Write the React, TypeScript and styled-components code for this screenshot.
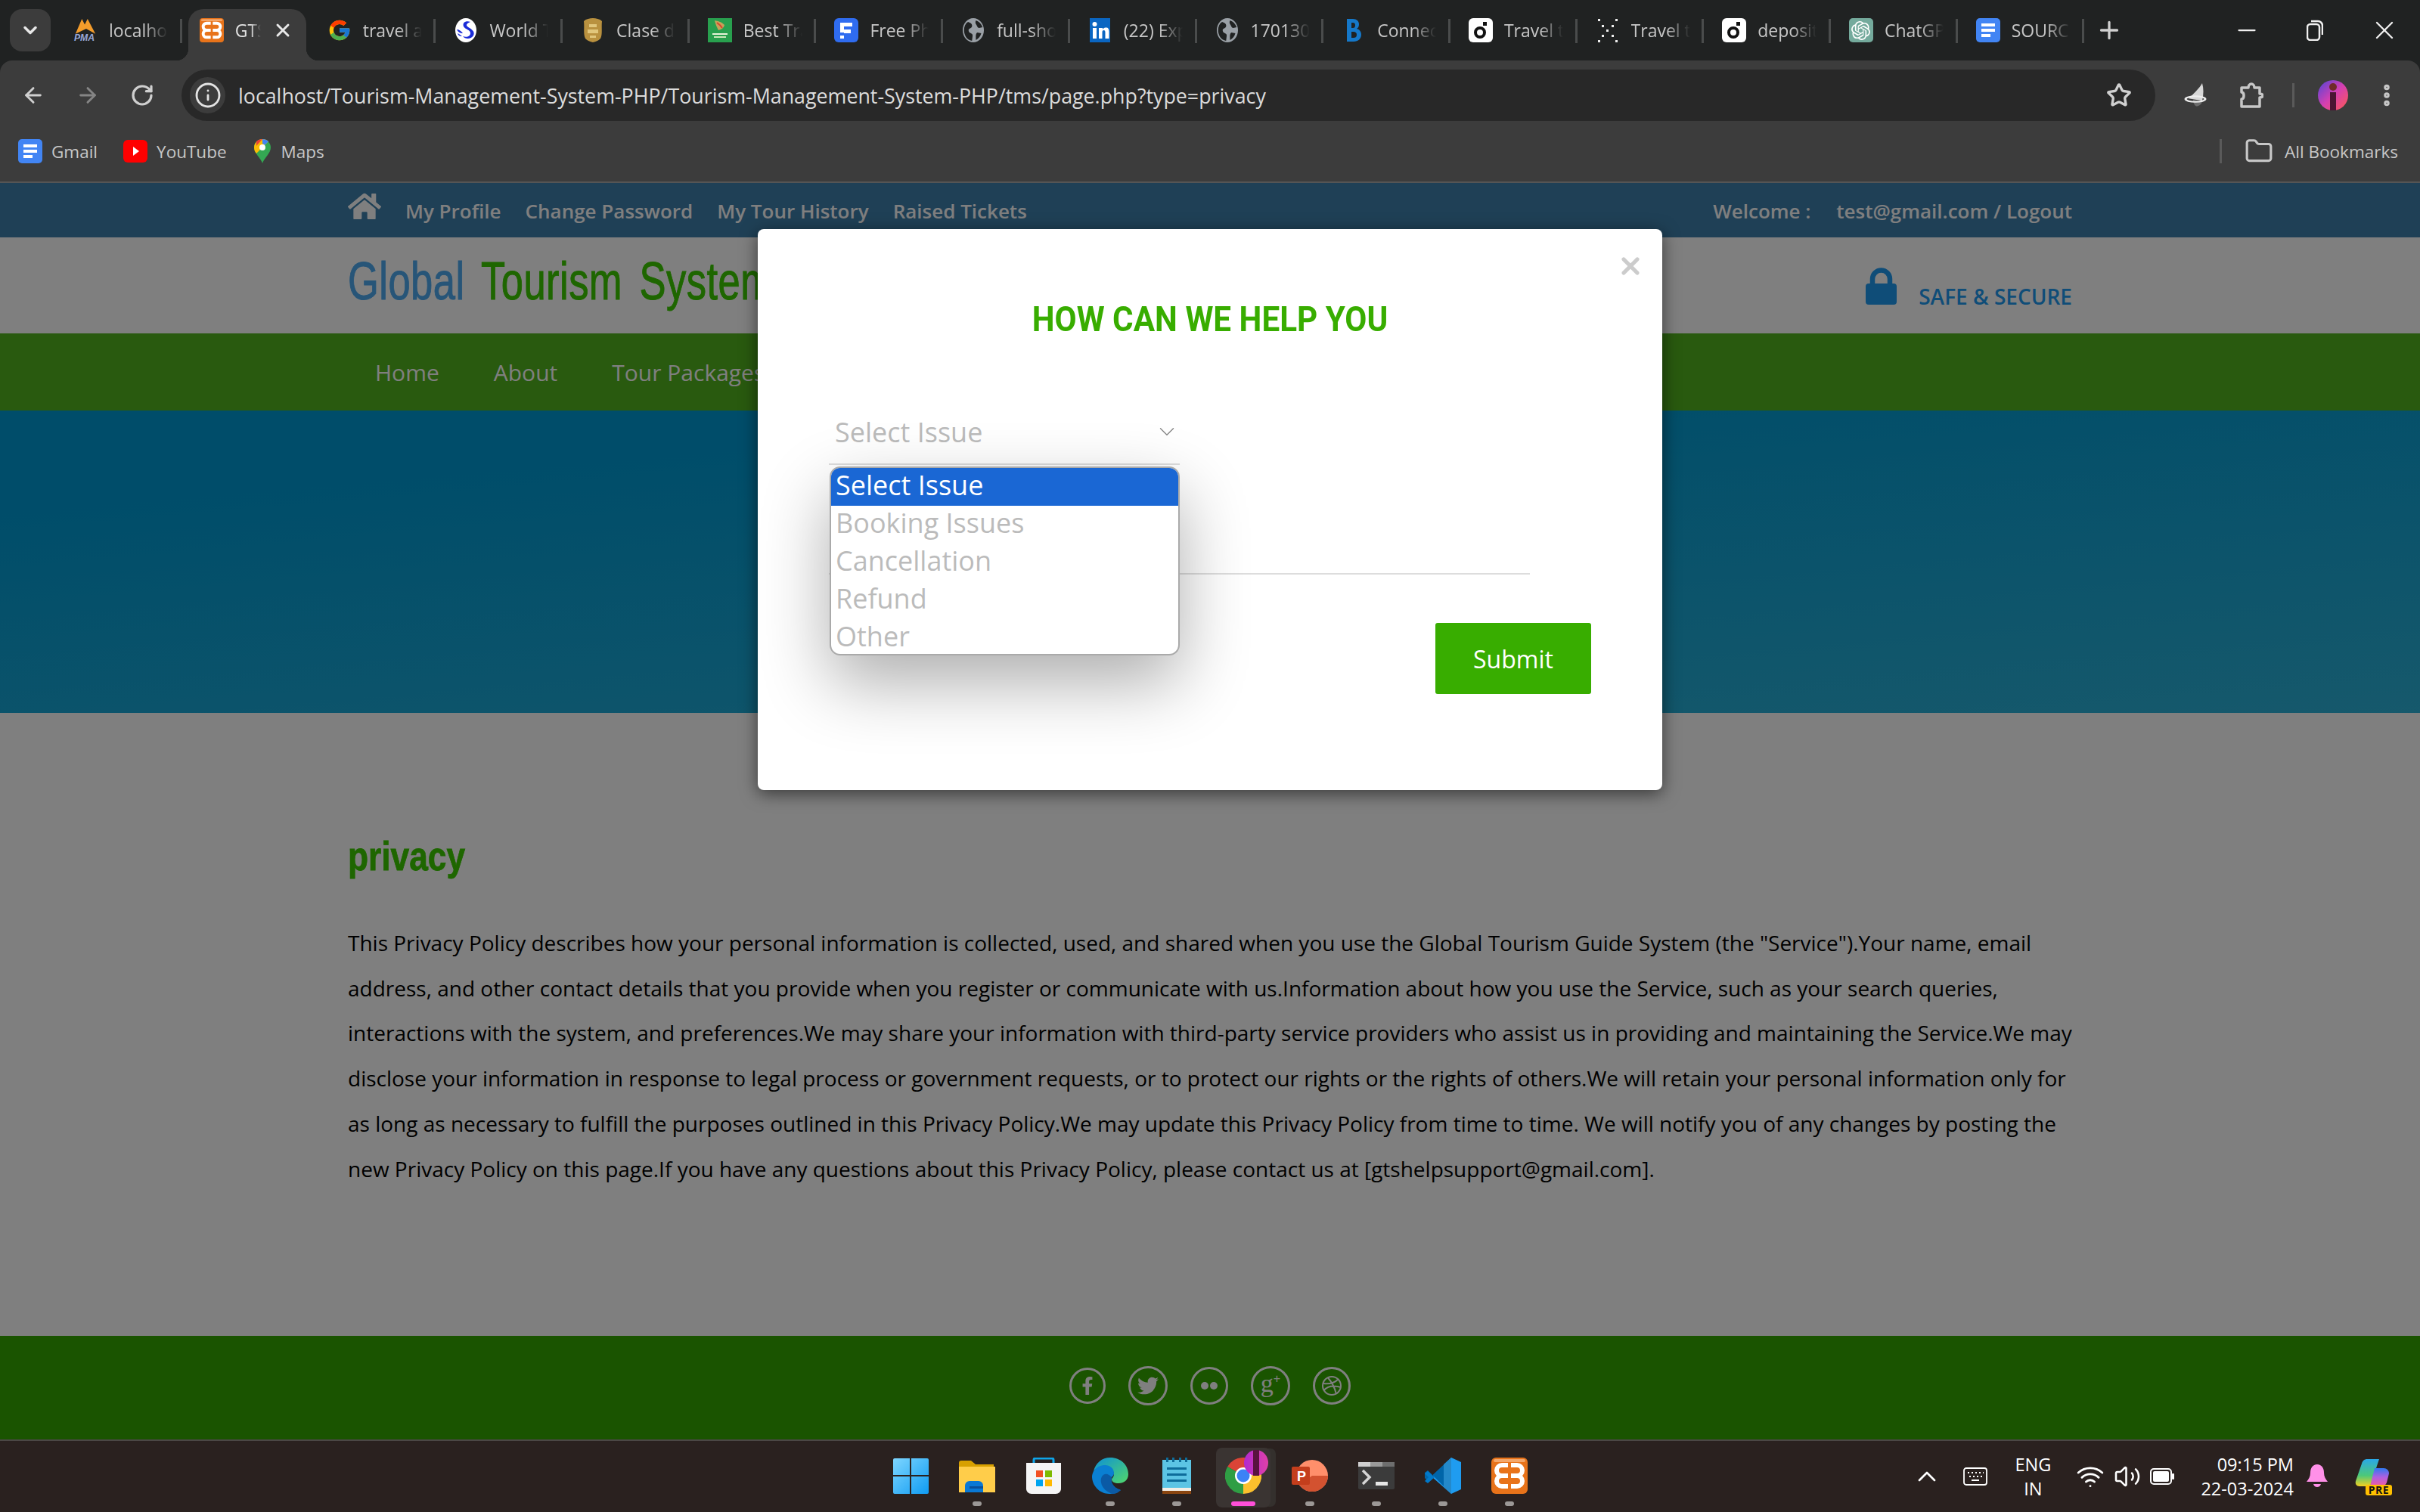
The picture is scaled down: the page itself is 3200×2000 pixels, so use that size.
import React from "react"
import styled, { createGlobalStyle } from "styled-components"
import {
	ArrowLeft,
	ArrowRight,
	ChevronDown,
	ChevronUp,
	EllipsisVertical,
	Folder,
	Info,
	Minus,
	Plus,
	RotateCw,
	Star,
	Volume2,
	Wifi,
	X,
} from "lucide-react"
import { FaFacebookF, FaHome, FaTwitter } from "react-icons/fa"
import { FcGoogle } from "react-icons/fc"
import { SiOpenai } from "react-icons/si"

const GlobalStyle = createGlobalStyle`
	html, body {
		margin: 0;
		padding: 0;
		background: #202222;
	}
	* {
		box-sizing: border-box;
	}
`

const SANS = `"Open Sans", "Noto Sans", sans-serif`
const ARIAL = `"Liberation Sans", Arial, sans-serif`

const Screen = styled.div`
	width: 3200px;
	height: 2000px;
	display: flex;
	flex-direction: column;
	overflow: hidden;
	font-family: ${SANS};
`

const Spacer = styled.span<{ $w: number }>`
	width: ${(p) => p.$w}px;
	flex: none;
`

/* browser chrome */
const TabStrip = styled.div`
	height: 80px;
	flex: none;
	background: #202222;
	display: flex;
	align-items: flex-start;
	padding: 12px 0 0 13px;
`

const TabSearch = styled.div`
	width: 54px;
	height: 56px;
	background: #3c3c3c;
	border-radius: 16px;
	display: flex;
	align-items: center;
	justify-content: center;
	color: #e8e8e8;
	margin-right: 6px;
	flex: none;
`

const Tab = styled.div<{ $active?: boolean }>`
	width: 167.7px;
	height: 68px;
	flex: none;
	display: flex;
	align-items: center;
	padding: 0 0 12px 24px;
	gap: 15px;
	position: relative;
	color: #c7c7c7;
	font-size: 23px;
	${(p) =>
		p.$active
			? `
		background: #3c3c3c;
		border-radius: 20px 20px 0 0;
		margin: 0 4px 0 8px;
		width: 156px;
		padding-left: 15px;
		z-index: 1;
		color: #e3e3e3;
		&::before, &::after {
			content: "";
			position: absolute;
			bottom: 0;
			width: 16px;
			height: 16px;
		}
		&::before {
			left: -16px;
			background: radial-gradient(circle at 0 0, transparent 16px, #3c3c3c 16.5px);
		}
		&::after {
			right: -16px;
			background: radial-gradient(circle at 100% 0, transparent 16px, #3c3c3c 16.5px);
		}
	`
			: `
		&::after {
			content: "";
			position: absolute;
			right: 0;
			top: 13px;
			width: 3px;
			height: 32px;
			background: #4a4c4c;
		}
	`}
`

const TabIcon = styled.span`
	width: 32px;
	height: 32px;
	flex: none;
	display: flex;
	align-items: center;
	justify-content: center;
`

const TabTitle = styled.span<{ $short?: boolean }>`
	width: ${(p) => (p.$short ? "34px" : "78px")};
	overflow: hidden;
	white-space: nowrap;
	-webkit-mask-image: linear-gradient(to right, #000 60%, transparent 100%);
	mask-image: linear-gradient(to right, #000 60%, transparent 100%);
`

const TabClose = styled.span`
	display: flex;
	color: #e8e8e8;
`

const NewTab = styled.div`
	margin-left: 15px;
	height: 56px;
	display: flex;
	align-items: center;
	color: #d0d0d0;
	flex: none;
`

const WindowControls = styled.div`
	margin-left: auto;
	display: flex;
	align-items: center;
	height: 56px;
	gap: 61px;
	padding-right: 27px;
	color: #f0f0f0;
`

const ToolBar = styled.div`
	height: 80px;
	flex: none;
	background: #3c3c3c;
	border-radius: 16px 16px 0 0;
	display: flex;
	align-items: flex-start;
	padding: 12px 0 0 28px;
	color: #c7c7c7;
`

const NavIcon = styled.div<{ $dim?: boolean; $gap: number }>`
	width: 32px;
	height: 68px;
	display: flex;
	align-items: center;
	justify-content: center;
	margin-right: ${(p) => p.$gap}px;
	color: ${(p) => (p.$dim ? "#858585" : "#cfcfcf")};
	flex: none;
`

const Omnibox = styled.div`
	width: 2610px;
	height: 68px;
	background: #282828;
	border-radius: 34px;
	display: flex;
	align-items: center;
	padding: 0 31px 0 11px;
	flex: none;
`

const SiteInfo = styled.div`
	width: 47px;
	height: 48px;
	background: #3c3c3c;
	border-radius: 50%;
	display: flex;
	align-items: center;
	justify-content: center;
	color: #e3e3e3;
	margin-right: 17px;
	flex: none;
`

const UrlText = styled.span`
	font-size: 26.8px;
	color: #dcdcdc;
	flex: 1;
	white-space: nowrap;
`

const ToolRight = styled.div`
	flex: 1;
	height: 68px;
	display: flex;
	align-items: center;
	padding-left: 38px;
`

const ToolDivider = styled.div`
	width: 3px;
	height: 32px;
	background: #5a5a5a;
	margin: 0 31px 0 38px;
	flex: none;
`

const MenuDots = styled.span`
	display: flex;
	margin-left: 33px;
	color: #c7c7c7;
`

const BookmarkBar = styled.div`
	height: 80px;
	flex: none;
	background: #3c3c3c;
	display: flex;
	align-items: center;
	padding: 0 29px 0 24px;
	color: #c7c7c7;
	font-size: 22.5px;
`

const Bookmark = styled.div`
	display: flex;
	align-items: center;
	gap: 12px;
	margin-right: 34px;
`

const AllBookmarks = styled.div`
	margin-left: auto;
	display: flex;
	align-items: center;
	gap: 15px;
	height: 32px;
	border-left: 3px solid #5a5a5a;
	padding-left: 30px;
`

/* tourism page */
const Page = styled.div`
	height: 1664px;
	flex: none;
	position: relative;
	display: flex;
	flex-direction: column;
	background: #ffffff;
	border-top: 2px solid #555;
`

const Wrap = styled.div`
	width: 2280px;
	margin: 0 auto;
	display: flex;
	align-items: center;
`

const TopBar = styled.div`
	height: 72px;
	flex: none;
	background: #3e80ad;
	color: #fff;
	font-size: 26px;
	font-weight: 600;
	display: flex;
	padding-top: 2px;
`

const TopLink = styled.span`
	margin-right: 32px;
	white-space: nowrap;
`

const HomeLink = styled.span`
	display: flex;
	margin-right: 32px;
	margin-bottom: 12px;
`

const TopRight = styled.span`
	margin-left: auto;
	white-space: pre;
`

const Header = styled.div`
	height: 127px;
	flex: none;
	background: #fff;
	display: flex;
`

const Logo = styled.div`
	font-family: ${ARIAL};
	font-size: 71px;
	word-spacing: 10px;
	letter-spacing: 0.6px;
	color: #4eaaf0;
	white-space: nowrap;
	margin-top: -12px;
	-webkit-text-stroke: 1px #4eaaf0;
	transform: scaleX(0.74);
	transform-origin: left center;
	span {
		color: #3ccc00;
		-webkit-text-stroke: 1px #3ccc00;
	}
`

const Secure = styled.div`
	margin-left: auto;
	display: flex;
	align-items: center;
	gap: 29px;
	color: #1f9af0;
	font-size: 28px;
	font-weight: 600;
	span {
		margin-top: 28px;
	}
`

const NavBar = styled.div`
	height: 102px;
	flex: none;
	background: #52b41e;
	color: #fff;
	font-size: 30px;
	display: flex;
`

const NavLink = styled.span`
	margin-right: 72px;
	white-space: nowrap;
	&:first-child {
		margin-left: 36px;
	}
`

const Banner = styled.div`
	height: 400px;
	flex: none;
	background: linear-gradient(175deg, #009bd4 20%, #2cb2d8);
`

const Content = styled.div`
	flex: 1;
	width: 2280px;
	margin: 0 auto;
	padding-top: 156px;
`

const PageTitle = styled.h2`
	font-family: ${ARIAL};
	font-weight: 700;
	font-size: 54px;
	color: #3ccc00;
	-webkit-text-stroke: 0.8px #3ccc00;
	margin: 0 0 53px;
	line-height: 66px;
	transform: scaleX(0.82);
	transform-origin: left center;
`

const PolicyText = styled.p`
	font-size: 28px;
	line-height: 59.7px;
	color: #000;
	margin: 0;
`

const Footer = styled.div`
	height: 137px;
	flex: none;
	background: #35a800;
	display: flex;
	align-items: center;
	justify-content: center;
	gap: 30px;
	padding-bottom: 5px;
`

const SocialRing = styled.span<{ $size: number }>`
	width: ${(p) => p.$size}px;
	height: ${(p) => p.$size}px;
	border-radius: 50%;
	border: 3px solid #ffffff;
	display: flex;
	align-items: center;
	justify-content: center;
	color: #fff;
`

const GooglePlus = styled.span`
	font-family: "Liberation Serif", serif;
	font-size: 34px;
	line-height: 34px;
	margin-top: -6px;
	color: #fff;
	sup {
		font-family: ${ARIAL};
		font-size: 16px;
		line-height: 0;
		vertical-align: 12px;
	}
`

const Backdrop = styled.div`
	position: absolute;
	inset: 0;
	background: rgba(0, 0, 0, 0.5);
`

const Modal = styled.div`
	position: absolute;
	left: 1002px;
	top: 61px;
	width: 1196px;
	height: 742px;
	background: #fff;
	border-radius: 8px;
	box-shadow: 0 5px 22px rgba(0, 0, 0, 0.55);
	padding: 92px 94px 0;
	display: flex;
	flex-direction: column;
`

const ModalClose = styled.span`
	position: absolute;
	right: 24px;
	top: 31px;
	color: #ccc;
	display: flex;
`

const ModalTitle = styled.h3`
	font-family: "Roboto", ${ARIAL};
	font-weight: 700;
	font-size: 46px;
	line-height: 54px;
	color: #38ad00;
	text-align: center;
	margin: 0 0 96px;
	transform: scaleX(0.918);
`

const SelectField = styled.div`
	width: 464px;
	height: 70px;
	flex: none;
	border-bottom: 2px solid #ddd;
	display: flex;
	align-items: center;
	justify-content: space-between;
	padding: 0 0 16px 8px;
	color: #bbb;
	font-size: 36px;
`

const TextField = styled.div`
	width: 927px;
	height: 145px;
	flex: none;
	border-bottom: 2px solid #ddd;
`

const SubmitRow = styled.div`
	display: flex;
	justify-content: flex-end;
	margin-top: 64px;
`

const SubmitButton = styled.button`
	width: 206px;
	height: 94px;
	background: #38ad00;
	color: #fff;
	border: none;
	border-radius: 3px;
	font-family: ${SANS};
	font-size: 32px;
`

const OptionList = styled.div`
	position: absolute;
	left: 95px;
	top: 314px;
	width: 463px;
	height: 250px;
	background: #fff;
	border: 2px solid #aaa;
	border-radius: 14px;
	overflow: hidden;
	box-shadow: 0 36px 90px rgba(0, 0, 0, 0.32);
`

const Option = styled.div<{ $selected?: boolean }>`
	height: 50px;
	line-height: 46px;
	padding-left: 6px;
	font-size: 36px;
	color: ${(p) => (p.$selected ? "#fff" : "#bbb")};
	background: ${(p) => (p.$selected ? "#1a67d4" : "transparent")};
`

/* taskbar */
const TaskBar = styled.div`
	flex: 1;
	background: #2a211f;
	border-top: 2px solid #4b4745;
	display: grid;
	grid-template-columns: 1fr auto 1fr;
	color: #fff;
`

const TaskIcons = styled.div`
	grid-column: 2;
	display: flex;
	align-items: flex-start;
	padding-top: 9px;
`

const TaskItem = styled.div<{ $active?: boolean }>`
	width: 88px;
	height: 79px;
	position: relative;
	display: flex;
	justify-content: center;
	padding-top: 13px;
	${(p) =>
		p.$active &&
		`
		&::before {
			content: "";
			position: absolute;
			left: 8px;
			top: 0;
			width: 72px;
			height: 79px;
			background: #3a3432;
			border-radius: 8px;
			box-shadow: 8px 0 0 -1px #34302d;
		}
	`}
`

const TaskGlyph = styled.div<{ $drop?: number }>`
	position: relative;
	height: 48px;
	padding-top: ${(p) => p.$drop ?? 0}px;
	line-height: 0;
`

const RunDot = styled.span<{ $active?: boolean }>`
	position: absolute;
	bottom: 2px;
	left: 50%;
	transform: translateX(-50%);
	width: ${(p) => (p.$active ? 32 : 12)}px;
	height: 6px;
	border-radius: 3px;
	background: ${(p) => (p.$active ? "#ff4fd8" : "#9c9896")};
`

const Tray = styled.div`
	grid-column: 3;
	display: flex;
	align-items: center;
	justify-content: flex-end;
	padding-right: 40px;
	font-size: 23.5px;
`

const TrayLang = styled.div`
	width: 60px;
	text-align: center;
	line-height: 32px;
	margin: 0 27px 0 30px;
`

const TrayClock = styled.div`
	text-align: right;
	line-height: 32px;
	margin: 0 17px 0 35px;
	white-space: nowrap;
`

const TrayGroup = styled.div`
	display: flex;
	align-items: center;
	gap: 12px;
`

const CopilotBox = styled.div`
	position: relative;
	margin-left: 36px;
	height: 46px;
`

const PreBadge = styled.span`
	position: absolute;
	right: -3px;
	bottom: -2px;
	background: #ffc000;
	color: #111;
	font-size: 14px;
	line-height: 14px;
	font-weight: 700;
	padding: 0 4px;
	border-radius: 3px;
	letter-spacing: 0.5px;
`

const ChatTile = styled.span`
	display: flex;
	width: 32px;
	height: 32px;
	background: #74aa9c;
	border-radius: 5px;
	align-items: center;
	justify-content: center;
`

/* drawn icons */
const DocIcon = () => (
	<svg width="32" height="32" viewBox="0 0 32 32">
		<rect width="32" height="32" rx="5" fill="#4285f4" />
		<rect x="7" y="7" width="18" height="4" fill="#fff" />
		<rect x="7" y="14" width="18" height="4" fill="#fff" />
		<rect x="7" y="21" width="12" height="4" fill="#fff" />
	</svg>
)

const Globe = () => (
	<svg width="28" height="32" viewBox="0 0 32 32" preserveAspectRatio="none">
		<circle cx="16" cy="16" r="16" fill="#9aa0a6" />
		<path d="M8 5c4 1 7 3 6 6s-6 2-5 6 6 2 6 6l-1 7c-8-1-12-8-12-14 0-5 2-9 6-11zM20 3c4 1 8 4 10 9l-5 1c-3 0-3-3-5-5-1-2-1-3 0-5zM22 19l6 1c-1 4-4 7-8 9 0-4-1-8 2-10z" fill="#202222" />
	</svg>
)

const PmaIcon = () => (
	<svg width="34" height="32" viewBox="0 0 34 32">
		<path d="M3 21 L12 0 L16 8 L20 0 L31 21 L18 14 Z" fill="#f39c2b" />
		<text x="1" y="31" fontSize="13" fontWeight="700" fontStyle="italic" fontFamily="Liberation Sans" fill="#9aa8d8">PMA</text>
	</svg>
)

const XamppIcon = ({ size = 32 }: { size?: number }) => (
	<svg width={size} height={size} viewBox="0 0 48 48" fill="none">
		<rect width="48" height="48" rx="6" fill="#e8731a" />
		<rect x="3" y="2" width="42" height="4" rx="2" fill="#f4a76a" />
		<g stroke="#fff" strokeWidth="6">
			<path d="M22 10H14a6.500 6.500 0 000 14h8M14 24a6.500 6.500 0 000 14h8" />
			<path d="M26 10h8a6.500 6.500 0 010 14h-8M34 24a6.500 6.500 0 010 14h-8" />
		</g>
	</svg>
)

const SwanIcon = () => (
	<svg width="28" height="32" viewBox="0 0 28 32">
		<ellipse cx="14" cy="16" rx="14" ry="16" fill="#fff" />
		<path d="M20 5c-6-2-11 1-9 6 2 4 9 4 9 9 0 4-5 6-10 4 3 4 11 4 14-1 3-6-4-9-8-12-2-2-1-4 4-6z" fill="#1a2bd8" />
		<path d="M2 15c3 0 6 2 8 5-3 0-6-1-8-5zm1 5c2 1 4 2 6 4-3 0-5-1-6-4z" fill="#1a2bd8" />
	</svg>
)

const BadgeIcon = () => (
	<svg width="26" height="32" viewBox="0 0 26 32">
		<path d="M13 0c4 0 9 1 12 4-1 9 1 17-2 23-3 3-6 4-10 5-4-1-7-2-10-5C0 21 2 13 1 4c3-3 8-4 12-4z" fill="#b9913f" />
		<path d="M8 8h10v4H8zM6 15h14v5H6zM9 23h8v3H9z" fill="#e1c67c" />
	</svg>
)

const GreenTile = () => (
	<svg width="32" height="32" viewBox="0 0 32 32">
		<rect width="32" height="32" fill="#28a04e" />
		<path d="M9 3c5 1 9 2 13 6-1 4-4 6-8 7-2-4-4-8-5-13z" fill="#c7a15a" />
		<path d="M12 6c3 2 5 4 7 7" stroke="#d8452c" strokeWidth="2" fill="none" />
		<rect x="6" y="20" width="20" height="2" fill="#e7f3d8" />
		<rect x="8" y="24" width="16" height="2" fill="#c9e8b8" />
	</svg>
)

const FreepikIcon = () => (
	<svg width="32" height="32" viewBox="0 0 32 32">
		<rect width="32" height="32" rx="6" fill="#2f6cf0" />
		<path d="M8 6h16v5H13v4h9v5h-9v-1H8z" fill="#fff" />
		<rect x="8" y="23" width="5" height="4" fill="#fff" />
	</svg>
)

const LinkedinIcon = () => (
	<svg width="27" height="32" viewBox="0 0 27 32">
		<rect width="27" height="32" fill="#0a66c2" />
		<rect x="4" y="13" width="5" height="14" fill="#fff" />
		<circle cx="6.5" cy="8" r="3" fill="#fff" />
		<path d="M12 13h5v2c1-2 3-2.500 4.500-2.500 3 0 4 2 4 5.500v9h-5v-8c0-2-.5-3-2-3s-2 1-2 3v8h-4.500z" fill="#fff" />
	</svg>
)

const BookingIcon = () => (
	<svg width="20" height="32" viewBox="0 0 20 32">
		<path d="M1 1h8c5 0 8 3 8 7 0 3-1 5-3 6 4 1 6 4 6 8 0 5-4 9-10 9H1zM7 6v7h2c2 0 3-1 3-3.500S11 6 9 6zm0 12v8h3c2 0 4-1 4-4s-2-4-4-4z" fill="#1578c9" />
	</svg>
)

const DepositIcon = () => (
	<svg width="32" height="32" viewBox="0 0 32 32">
		<rect width="32" height="32" rx="6" fill="#fff" />
		<circle cx="15" cy="19" r="6" fill="none" stroke="#111" strokeWidth="4" />
		<rect x="19" y="5" width="5" height="5" fill="#111" />
	</svg>
)

const DotsIcon = () => (
	<svg width="28" height="32" viewBox="0 0 28 32" fill="#eee">
		{[[1, 1], [24, 1], [6, 9], [19, 9], [12, 15], [6, 22], [19, 22], [1, 29], [24, 29]].map(([x, y]) => (
			<rect key={`${x}-${y}`} x={x} y={y} width="3" height="3" />
		))}
	</svg>
)

const ChatIcon = () => (
	<ChatTile>
		<SiOpenai size={25} color="#fff" />
	</ChatTile>
)

const YoutubeIcon = () => (
	<svg width="32" height="32" viewBox="0 0 32 32">
		<rect y="1" width="32" height="30" rx="6" fill="#ff0000" />
		<path d="M13 10l8 6-8 6z" fill="#fff" />
	</svg>
)

const MapsIcon = () => (
	<svg width="26" height="32" viewBox="0 0 26 32">
		<g transform="translate(2 0)">
			<path d="M11 32C9 25 0 19 0 11 0 5 5 0 11 0s11 5 11 11c0 8-9 14-11 21z" fill="#34a853" />
			<path d="M11 0c3 0 6 1 8 3L3 19c-2-2-3-5-3-8C0 5 5 0 11 0z" fill="#fbbc04" />
			<path d="M3 3c2-2 5-3 8-3l-8 9z" fill="#ea4335" />
			<path d="M11 0c3 0 6 1 8 3l-5 5c-1-1-2-2-3-2z" fill="#4285f4" />
			<circle cx="11" cy="11" r="4" fill="#fff" />
		</g>
	</svg>
)

const ExtensionSail = () => (
	<svg width="34" height="32" viewBox="0 0 34 44" preserveAspectRatio="none">
		<path d="M24 0c2 10 2 20 0 32L6 28C12 20 20 10 24 0z" fill="#d8d8d8" />
		<path d="M12 30l12 4c-1 4-4 8-8 8-3-2-4-8-4-12z" fill="#6d6d6d" />
		<ellipse cx="15" cy="29" rx="13" ry="5" fill="none" stroke="#eee" strokeWidth="3" />
	</svg>
)

const PuzzleIcon = () => (
	<svg width="32" height="34" viewBox="0 0 32 34" fill="none" stroke="#c7c7c7" strokeWidth="3.500" strokeLinejoin="round">
		<path d="M3 7h9c0-3 2-5 4-5s4 2 4 5h7v8c3 0 4 1 4 2.500S30 20 27 20v12H3V22c2 0 3-2 3-4.500S5 13 3 13z" />
	</svg>
)

const AvatarIcon = () => (
	<svg width="40" height="40" viewBox="0 0 40 40">
		<defs>
			<linearGradient id="avatar" x1="0" x2="1" y1="0" y2="1">
				<stop offset="0" stopColor="#4d46d8" />
				<stop offset=".5" stopColor="#d43fb2" />
				<stop offset="1" stopColor="#ff5a52" />
			</linearGradient>
		</defs>
		<circle cx="20" cy="20" r="20" fill="url(#avatar)" />
		<rect x="16" y="16" width="8" height="24" fill="#4a1533" />
		<circle cx="20" cy="9" r="5" fill="#6f2a2a" />
	</svg>
)

const LockIcon = () => (
	<svg width="41" height="50" viewBox="0 0 41 50">
		<path d="M9 24V16a11.500 11.500 0 0123 0v8" fill="none" stroke="currentColor" strokeWidth="6.500" />
		<rect y="22" width="41" height="28" rx="4" fill="currentColor" />
	</svg>
)

const DribbbleBall = () => (
	<svg width="26" height="26" viewBox="0 0 26 26" fill="none" stroke="#fff" strokeWidth="2">
		<circle cx="13" cy="13" r="12" />
		<path d="M8 2.500C13 8 17 16 19 24M2 10c7 1 14 0 20-6M2.500 19C7 14 15 12 25 15" />
	</svg>
)

const WindowsIcon = () => (
	<svg width="47" height="48" viewBox="0 0 47 48">
		<defs>
			<linearGradient id="win" x1="0" x2="1" y1="0" y2="1">
				<stop offset="0" stopColor="#7ed6ff" />
				<stop offset="1" stopColor="#0f9bf2" />
			</linearGradient>
		</defs>
		<path d="M2 1h20v22H0V3a2 2 0 012-2zM24 1h21a2 2 0 012 2v20H24zM0 25h22v23H2a2 2 0 01-2-2zM24 25h23v21a2 2 0 01-2 2H24z" fill="url(#win)" />
	</svg>
)

const ExplorerIcon = () => (
	<svg width="48" height="42" viewBox="0 0 48 42">
		<path d="M0 3a3 3 0 013-3h13l6 5h24v8H0z" fill="#d8a000" />
		<path d="M0 8h48v34H0z" fill="#ffcd4a" />
		<path d="M8 42V33a6 6 0 016-6h12a6 6 0 016 6v9z" fill="#0a78d4" />
		<rect x="14" y="34" width="18" height="3" fill="#0a4f98" />
	</svg>
)

const StoreIcon = () => (
	<svg width="46" height="48" viewBox="0 0 46 48">
		<path d="M10 10V3a2 2 0 012-2h22a2 2 0 012 2v7" fill="none" stroke="#0ea5e9" strokeWidth="3" />
		<path d="M0 7h46v34c0 4-3 7-7 7H7c-4 0-7-3-7-7z" fill="#f5f5f5" />
		<rect x="13" y="17" width="9" height="9" fill="#f25022" />
		<rect x="25" y="17" width="9" height="9" fill="#7fba00" />
		<rect x="13" y="29" width="9" height="9" fill="#00a4ef" />
		<rect x="25" y="29" width="9" height="9" fill="#ffb900" />
	</svg>
)

const EdgeIcon = () => (
	<svg width="48" height="48" viewBox="0 0 48 48">
		<defs>
			<linearGradient id="edgeTop" x1="0" x2="1" y1="0" y2="1">
				<stop offset="0" stopColor="#0c8fd8" />
				<stop offset="1" stopColor="#52d86a" />
			</linearGradient>
		</defs>
		<path d="M2 18C5 7 13 0 24 0c14 0 24 10 24 22 0 8-6 12-13 12-5 0-9-2-9-5 0-2 3-3 3-7 0-6-6-9-12-9S5 14 2 18z" fill="url(#edgeTop)" />
		<path d="M2 18c4-6 10-8 15-8 7 0 12 4 12 11 0 2-1 3-3 5-2 5 1 14 12 17-4 3-9 5-15 5C10 48 0 37 0 25c0-2 1-5 2-7z" fill="#0a7fd2" />
		<path d="M17 22c-4 1-6 6-5 11 1 7 8 13 15 15 5 0 8-2 11-5-11-3-14-12-12-17-3-3-6-5-9-4z" fill="#0b5aa5" />
	</svg>
)

const NotepadIcon = () => (
	<svg width="38" height="48" viewBox="0 0 38 48">
		<path d="M0 3h38v40H0z" fill="#5cc4e4" />
		<path d="M0 40h38v4H0z" fill="#f3ede4" />
		<path d="M0 44h38v4H0z" fill="#8a4510" />
		<g fill="#0d6c9a">
			<rect x="5" y="0" width="3" height="6" />
			<rect x="13" y="0" width="3" height="6" />
			<rect x="22" y="0" width="3" height="6" />
			<rect x="30" y="0" width="3" height="6" />
			<rect x="6" y="13" width="26" height="3" />
			<rect x="6" y="21" width="26" height="3" />
			<rect x="6" y="29" width="26" height="3" />
		</g>
	</svg>
)

const ChromeIcon = () => (
	<svg width="48" height="48" viewBox="0 0 48 48">
		<path d="M24 24L3.200 12A24 24 0 0144.800 12z" fill="#db4437" />
		<path d="M24 24L44.800 12A24 24 0 0124 48z" fill="#fbc02d" />
		<path d="M24 24L24 48A24 24 0 013.200 12z" fill="#2f9e44" />
		<circle cx="24" cy="24" r="11" fill="#fff" />
		<circle cx="24" cy="24" r="8.500" fill="#3b82f6" />
	</svg>
)

const AvatarBadge = styled.span`
	position: absolute;
	right: -9px;
	top: -10px;
	width: 32px;
	height: 34px;
	border-radius: 50%;
	background: linear-gradient(90deg, #b02ad0, #e040a8);
	&::after {
		content: "";
		position: absolute;
		left: 12px;
		top: 0;
		width: 8px;
		height: 34px;
		background: #5a1240;
	}
`

const PowerPointIcon = () => (
	<svg width="48" height="42" viewBox="0 0 48 42">
		<circle cx="27" cy="21" r="21" fill="#ff8f6b" />
		<path d="M27 21h21a21 21 0 01-21 21 21 21 0 01-17-9z" fill="#d35230" />
		<rect y="9" width="24" height="24" rx="2" fill="#c43e1c" />
		<text x="7" y="28" fontSize="18" fontWeight="700" fontFamily="Liberation Sans" fill="#fff">P</text>
	</svg>
)

const TerminalIcon = () => (
	<svg width="48" height="36" viewBox="0 0 48 36">
		<rect width="48" height="36" rx="2" fill="#3b3b3b" />
		<rect width="16" height="6" fill="#cfcfcf" />
		<rect x="16" width="16" height="6" fill="#9a9a9a" />
		<rect x="32" width="16" height="6" fill="#6e6e6e" />
		<path d="M6 11l9 9-9 9" fill="none" stroke="#d5d5d5" strokeWidth="3.500" />
		<rect x="23" y="26" width="16" height="5" fill="#e6e6e6" />
	</svg>
)

const VscodeIcon = () => (
	<svg width="48" height="48" viewBox="0 0 48 48">
		<path d="M35 0l13 6v36l-13 6L10 26z" fill="#1f9cf0" />
		<path d="M35 0L3 30 0 27v-7l4-3 31 31z" fill="#0065a9" />
		<path d="M35 0v48l-10-9V9z" fill="#2489ca" />
		<path d="M0 21l4-3 9 8-9 8-4-3 5-5z" fill="#0078c9" />
	</svg>
)

const KeyboardIcon = () => (
	<svg width="32" height="24" viewBox="0 0 32 24" fill="none" stroke="#fff" strokeWidth="1.800">
		<rect x="1" y="1" width="30" height="22" rx="3" />
		<path d="M6 7h2M11 7h2M16 7h2M21 7h2M26 7h1M8 12h2M13 12h2M18 12h2M23 12h2M11 17h10" />
	</svg>
)

const BatteryIcon = () => (
	<svg width="32" height="22" viewBox="0 0 32 22">
		<rect x="1" y="1" width="27" height="20" rx="4" fill="none" stroke="#fff" strokeWidth="2" />
		<rect x="4" y="4" width="21" height="14" rx="2" fill="#fff" />
		<rect x="29" y="7" width="3" height="8" rx="1" fill="#fff" />
	</svg>
)

const BellIcon = () => (
	<svg width="28" height="32" viewBox="0 0 28 32">
		<path d="M14 0c6 0 9 5 9 11 0 5 2 8 5 12H0c3-4 5-7 5-12C5 5 8 0 14 0z" fill="#ff90e8" />
		<path d="M9 26h10c-1 3-3 4-5 4s-4-1-5-4z" fill="#ff90e8" />
	</svg>
)

const CopilotIcon = () => (
	<svg width="46" height="46" viewBox="0 0 46 46">
		<defs>
			<linearGradient id="cpA" x1="0" x2="0" y1="0" y2="1">
				<stop offset="0" stopColor="#2aa8e8" />
				<stop offset=".6" stopColor="#4bc87a" />
				<stop offset="1" stopColor="#f5d020" />
			</linearGradient>
			<linearGradient id="cpB" x1="0" x2="0" y1="0" y2="1">
				<stop offset="0" stopColor="#2f78f0" />
				<stop offset=".5" stopColor="#b060e0" />
				<stop offset="1" stopColor="#f05aa0" />
			</linearGradient>
		</defs>
		<path d="M16 0h16l-12 36H6c-4 0-6-3-5-7L9 6c1-4 4-6 7-6z" fill="url(#cpA)" />
		<path d="M26 12h12c4 0 7 3 7 7l-3 12c-1 3-4 5-7 5H20z" fill="url(#cpB)" />
	</svg>
)

const TABS = [
	{ id: "pma", icon: <PmaIcon />, title: "localhost" },
	{ id: "gts", icon: <XamppIcon />, title: "GTS", active: true },
	{ id: "google", icon: <FcGoogle size={32} />, title: "travel agency" },
	{ id: "world", icon: <SwanIcon />, title: "World Travel" },
	{ id: "clase", icon: <BadgeIcon />, title: "Clase de" },
	{ id: "best", icon: <GreenTile />, title: "Best Travel" },
	{ id: "free", icon: <FreepikIcon />, title: "Free Photos" },
	{ id: "shot", icon: <Globe />, title: "full-shot" },
	{ id: "linkedin", icon: <LinkedinIcon />, title: "(22) Explore" },
	{ id: "num", icon: <Globe />, title: "1701300" },
	{ id: "booking", icon: <BookingIcon />, title: "Connect" },
	{ id: "travel1", icon: <DepositIcon />, title: "Travel tour" },
	{ id: "travel2", icon: <DotsIcon />, title: "Travel tour" },
	{ id: "deposit", icon: <DepositIcon />, title: "deposit" },
	{ id: "chat", icon: <ChatIcon />, title: "ChatGPT" },
	{ id: "source", icon: <DocIcon />, title: "SOURCE" },
]

const ISSUES = ["Select Issue", "Booking Issues", "Cancellation", "Refund", "Other"]

const App = () => {
	return (
		<Screen>
			<GlobalStyle />
			<TabStrip>
				<TabSearch>
					<ChevronDown size={28} strokeWidth={3} />
				</TabSearch>
				{TABS.map((tab) => (
					<Tab key={tab.id} $active={tab.active}>
						<TabIcon>{tab.icon}</TabIcon>
						<TabTitle $short={tab.active}>{tab.title}</TabTitle>
						{tab.active && (
							<TabClose>
								<X size={28} strokeWidth={2.5} />
							</TabClose>
						)}
					</Tab>
				))}
				<NewTab>
					<Plus size={36} strokeWidth={2.2} />
				</NewTab>
				<WindowControls>
					<Minus size={36} strokeWidth={1.5} />
					<svg width="22" height="28" viewBox="0 0 22 28" fill="none" stroke="#f0f0f0" strokeWidth="2.500">
						<rect x="1" y="6" width="16" height="21" rx="4" />
						<path d="M6 2h9a6 6 0 016 6v12" />
					</svg>
					<X size={40} strokeWidth={1.4} />
				</WindowControls>
			</TabStrip>
			<ToolBar>
				<NavIcon $gap={40}>
					<ArrowLeft size={38} strokeWidth={2.2} />
				</NavIcon>
				<NavIcon $dim $gap={40}>
					<ArrowRight size={38} strokeWidth={2.2} />
				</NavIcon>
				<NavIcon $gap={36}>
					<RotateCw size={34} strokeWidth={2.4} />
				</NavIcon>
				<Omnibox>
					<SiteInfo>
						<Info size={36} strokeWidth={1.9} />
					</SiteInfo>
					<UrlText>localhost/Tourism-Management-System-PHP/Tourism-Management-System-PHP/tms/page.php?type=privacy</UrlText>
					<Star size={34} strokeWidth={2.4} color="#d0d0d0" />
				</Omnibox>
				<ToolRight>
					<ExtensionSail />
					<Spacer $w={39} />
					<PuzzleIcon />
					<ToolDivider />
					<AvatarIcon />
					<MenuDots>
						<EllipsisVertical size={36} strokeWidth={3} />
					</MenuDots>
				</ToolRight>
			</ToolBar>
			<BookmarkBar>
				<Bookmark>
					<DocIcon />
					Gmail
				</Bookmark>
				<Bookmark>
					<YoutubeIcon />
					YouTube
				</Bookmark>
				<Bookmark>
					<MapsIcon />
					Maps
				</Bookmark>
				<AllBookmarks>
					<Folder size={38} strokeWidth={2} />
					All Bookmarks
				</AllBookmarks>
			</BookmarkBar>

			<Page>
				<TopBar>
					<Wrap>
						<HomeLink>
							<FaHome size={44} />
						</HomeLink>
						<TopLink>My Profile</TopLink>
						<TopLink>Change Password</TopLink>
						<TopLink>My Tour History</TopLink>
						<TopLink>Raised Tickets</TopLink>
						<TopRight>{"Welcome :     test@gmail.com / Logout"}</TopRight>
					</Wrap>
				</TopBar>
				<Header>
					<Wrap>
						<Logo>
							Global <span>Tourism System</span>
						</Logo>
						<Secure>
							<LockIcon />
							<span>SAFE &amp; SECURE</span>
						</Secure>
					</Wrap>
				</Header>
				<NavBar>
					<Wrap>
						<NavLink>Home</NavLink>
						<NavLink>About</NavLink>
						<NavLink>Tour Packages</NavLink>
					</Wrap>
				</NavBar>
				<Banner />
				<Content>
					<PageTitle>privacy</PageTitle>
					<PolicyText>
						This Privacy Policy describes how your personal information is collected, used, and shared when you use the Global Tourism Guide System (the "Service").Your name, email address, and other contact details that you provide when you register or communicate with us.Information about how you use the Service, such as your search queries, interactions with the system, and preferences.We may share your information with third-party service providers who assist us in providing and maintaining the Service.We may disclose your information in response to legal process or government requests, or to protect our rights or the rights of others.We will retain your personal information only for as long as necessary to fulfill the purposes outlined in this Privacy Policy.We may update this Privacy Policy from time to time. We will notify you of any changes by posting the new Privacy Policy on this page.If you have any questions about this Privacy Policy, please contact us at [gtshelpsupport@gmail.com].
					</PolicyText>
				</Content>
				<Footer>
					<SocialRing $size={48}>
						<FaFacebookF size={24} />
					</SocialRing>
					<SocialRing $size={52}>
						<FaTwitter size={28} />
					</SocialRing>
					<SocialRing $size={50}>
						<svg width="24" height="10" viewBox="0 0 24 10" fill="#fff">
							<circle cx="6" cy="5" r="5" />
							<circle cx="18" cy="5" r="5" />
						</svg>
					</SocialRing>
					<SocialRing $size={52}>
						<GooglePlus>
							g<sup>+</sup>
						</GooglePlus>
					</SocialRing>
					<SocialRing $size={50}>
						<DribbbleBall />
					</SocialRing>
				</Footer>
				<Backdrop />
				<Modal>
					<ModalClose>
						<X size={36} strokeWidth={3.5} />
					</ModalClose>
					<ModalTitle>HOW CAN WE HELP YOU</ModalTitle>
					<SelectField>
						Select Issue
						<ChevronDown size={34} strokeWidth={1} color="#888" />
					</SelectField>
					<TextField />
					<SubmitRow>
						<SubmitButton>Submit</SubmitButton>
					</SubmitRow>
					<OptionList>
						{ISSUES.map((issue, index) => (
							<Option key={issue} $selected={index === 0}>
								{issue}
							</Option>
						))}
					</OptionList>
				</Modal>
			</Page>

			<TaskBar>
				<TaskIcons>
					<TaskItem>
						<TaskGlyph>
							<WindowsIcon />
						</TaskGlyph>
					</TaskItem>
					<TaskItem>
						<TaskGlyph $drop={4}>
							<ExplorerIcon />
						</TaskGlyph>
						<RunDot />
					</TaskItem>
					<TaskItem>
						<TaskGlyph>
							<StoreIcon />
						</TaskGlyph>
					</TaskItem>
					<TaskItem>
						<TaskGlyph>
							<EdgeIcon />
						</TaskGlyph>
						<RunDot />
					</TaskItem>
					<TaskItem>
						<TaskGlyph>
							<NotepadIcon />
						</TaskGlyph>
						<RunDot />
					</TaskItem>
					<TaskItem $active>
						<TaskGlyph>
							<ChromeIcon />
							<AvatarBadge />
						</TaskGlyph>
						<RunDot $active />
					</TaskItem>
					<TaskItem>
						<TaskGlyph $drop={3}>
							<PowerPointIcon />
						</TaskGlyph>
						<RunDot />
					</TaskItem>
					<TaskItem>
						<TaskGlyph $drop={6}>
							<TerminalIcon />
						</TaskGlyph>
						<RunDot />
					</TaskItem>
					<TaskItem>
						<TaskGlyph>
							<VscodeIcon />
						</TaskGlyph>
						<RunDot />
					</TaskItem>
					<TaskItem>
						<TaskGlyph>
							<XamppIcon size={48} />
						</TaskGlyph>
						<RunDot />
					</TaskItem>
				</TaskIcons>
				<Tray>
					<ChevronUp size={40} strokeWidth={1.6} />
					<Spacer $w={28} />
					<KeyboardIcon />
					<TrayLang>
						ENG
						<br />
						IN
					</TrayLang>
					<TrayGroup>
						<Wifi size={38} strokeWidth={1.8} />
						<Volume2 size={36} strokeWidth={1.7} />
						<BatteryIcon />
					</TrayGroup>
					<TrayClock>
						09:15 PM
						<br />
						22-03-2024
					</TrayClock>
					<BellIcon />
					<CopilotBox>
						<CopilotIcon />
						<PreBadge>PRE</PreBadge>
					</CopilotBox>
				</Tray>
			</TaskBar>
		</Screen>
	)
}

export default App
